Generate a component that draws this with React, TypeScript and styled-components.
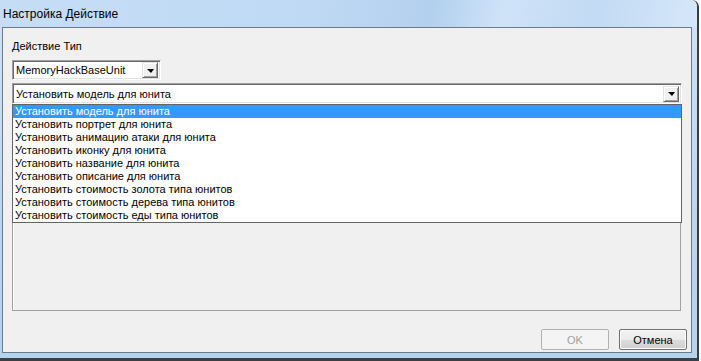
import React from 'react';
import styled, { createGlobalStyle } from 'styled-components';

const actions = [
    'Установить модель для юнита',
    'Установить портрет для юнита',
    'Установить анимацию атаки для юнита',
    'Установить иконку для юнита',
    'Установить название для юнита',
    'Установить описание для юнита',
    'Установить стоимость золота типа юнитов',
    'Установить стоимость дерева типа юнитов',
    'Установить стоимость еды типа юнитов',
];

const App = (): JSX.Element => {
    return (
        <>
            <GlobalStyle />
            <Window>
                <TitleBar>Настройка Действие</TitleBar>
                <Client>
                    <Form>
                        <Label>Действие Тип</Label>
                        <Combo width='149px' height='20px'>
                            <ComboText>MemoryHackBaseUnit</ComboText>
                            <DropButton><Arrow /></DropButton>
                        </Combo>
                        <ActionPicker>
                            <Combo width='100%' height='21px' top='3px'>
                                <ComboText>{actions[0]}</ComboText>
                                <DropButton><Arrow /></DropButton>
                            </Combo>
                            <DropList>
                                {actions.map((a, i) => (
                                    <ListItem key={a} selected={i === 0}>{a}</ListItem>
                                ))}
                            </DropList>
                        </ActionPicker>
                        <Panel />
                    </Form>
                    <ButtonRow>
                        <Button disabled>OK</Button>
                        <Button>Отмена</Button>
                    </ButtonRow>
                </Client>
            </Window>
        </>
    );
};

const GlobalStyle = createGlobalStyle`
    html, body {
        margin: 0;
        padding: 0;
        background: #ffffff;
    }
    body {
        font-family: "Liberation Sans", Arial, sans-serif;
        font-size: 11px;
        color: #000;
    }
`

const Window = styled.div`
    box-sizing: border-box;
    width: 699px;
    height: 361px;
    display: flex;
    flex-direction: column;
    background: linear-gradient(to bottom, #cfe2f7 0%, #bcd6f1 60%, #b6d2ef 100%);
    border-right: 2px solid #3b3f44;
    border-bottom: 3px solid #3b3f44;
    border-top-right-radius: 7px;
`

const TitleBar = styled.div`
    height: 27px;
    flex-shrink: 0;
    display: flex;
    align-items: center;
    padding-left: 3px;
    font-size: 12px;
    color: #000;
    border-top-right-radius: 6px;
    background: linear-gradient(100deg, #c6ddf6 0%, #bfd9f4 45%, #b3d0ee 62%, #cfe3f8 72%, #c2daf3 85%, #d5e7fa 100%);
`

const Client = styled.div`
    flex: 1;
    margin: 0 5px 5px 2px;
    border: 1px solid #6c7a8b;
    background: #f0f0f0;
    display: flex;
    flex-direction: column;
    padding: 12px 4px 0 9px;
`

const Form = styled.div`
    display: flex;
    flex-direction: column;
    margin-right: 5px;
`

const Label = styled.div`
    height: 13px;
    line-height: 13px;
`

const Combo = styled.div<{ width: string; height: string; top?: string }>`
    box-sizing: border-box;
    width: ${p => p.width};
    height: ${p => p.height};
    margin-top: ${p => p.top || '7px'};
    display: flex;
    align-items: center;
    background: #fff;
    border: 1px solid;
    border-color: #a0a0a0 #ffffff #ffffff #a0a0a0;
    box-shadow: inset 1px 1px 0 #696969, inset -1px -1px 0 #e3e3e3;
    padding: 2px 2px 2px 3px;
`

const ComboText = styled.span`
    flex: 1;
    line-height: 14px;
    white-space: nowrap;
    overflow: hidden;
`

const DropButton = styled.div`
    box-sizing: border-box;
    width: 16px;
    height: 16px;
    display: flex;
    align-items: center;
    justify-content: center;
    background: #f0f0f0;
    border: 1px solid;
    border-color: #e3e3e3 #696969 #696969 #e3e3e3;
    box-shadow: inset 1px 1px 0 #ffffff, inset -1px -1px 0 #a0a0a0;
`

const Arrow = styled.span`
    width: 0;
    height: 0;
    border-left: 4px solid transparent;
    border-right: 3px solid transparent;
    border-top: 4px solid #000;
    margin-top: 1px;
`

const ActionPicker = styled.div`
    position: relative;
    z-index: 1;
`

const DropList = styled.div`
    position: absolute;
    left: 0;
    right: 0;
    top: 100%;
    box-sizing: border-box;
    border: 1px solid #646464;
    background: #fff;
`

const ListItem = styled.div<{ selected?: boolean }>`
    height: 13px;
    line-height: 13px;
    padding-left: 2px;
    white-space: nowrap;
    background: ${p => (p.selected ? '#3399ff' : '#fff')};
    color: ${p => (p.selected ? '#fff' : '#000')};
`

const Panel = styled.div`
    height: 205px;
    margin-right: 1px;
    border: 1px solid #a0a0a0;
    box-shadow: inset 1px 1px 0 #ffffff;
`

const ButtonRow = styled.div`
    display: flex;
    justify-content: flex-end;
    gap: 10px;
    margin-top: 18px;
`

const Button = styled.button`
    box-sizing: border-box;
    width: 68px;
    height: 21px;
    padding: 0;
    font-family: "Liberation Sans", Arial, sans-serif;
    font-size: 11px;
    color: #000;
    border: 1px solid #707070;
    border-radius: 2px;
    background: linear-gradient(to bottom, #f2f2f2 0%, #ebebeb 50%, #dddddd 51%, #cfcfcf 100%);
    box-shadow: inset 0 0 0 1px #fcfcfc;
    &:disabled {
        color: #a0a0a0;
        border-color: #adb2b5;
        background: #f4f4f4;
        box-shadow: none;
    }
`

export default App;
